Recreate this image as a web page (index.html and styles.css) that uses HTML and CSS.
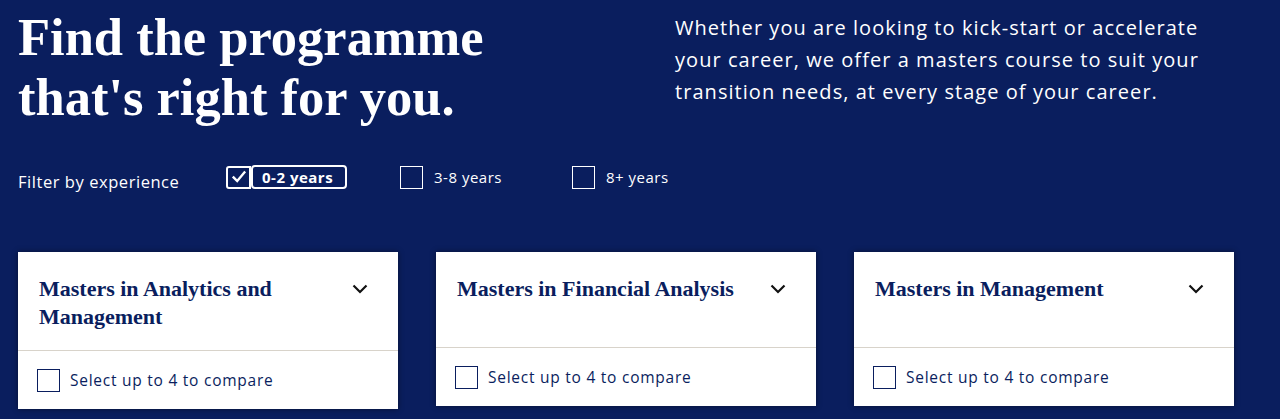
FILE: index.html
```html
<!DOCTYPE html>
<html lang="en">
<head>
<meta charset="utf-8">
<title>Find the programme</title>
<link rel="stylesheet" href="styles.css">
</head>
<body>
<main class="page">
  <section class="intro">
    <h1 class="intro-title">Find the programme that's right for you.</h1>
    <p class="intro-text">Whether you are looking to kick-start or accelerate your career, we offer a masters course to suit your transition needs, at every stage of your career.</p>
  </section>

  <section class="filter">
    <span class="filter-label">Filter by experience</span>
    <label class="option option-checked">
      <span class="box box-checked">
        <svg viewBox="0 0 20 20" width="18" height="18"><path d="M4 10.5 L8 14.5 L16 5" fill="none" stroke="#fff" stroke-width="2.6" stroke-linecap="square"/></svg>
      </span>
      <span class="option-text">0-2 years</span>
    </label>
    <label class="option">
      <span class="box"></span>
      <span class="option-text">3-8 years</span>
    </label>
    <label class="option">
      <span class="box"></span>
      <span class="option-text">8+ years</span>
    </label>
  </section>

  <section class="cards">
    <article class="card">
      <div class="card-head">
        <h2 class="card-title">Masters in Analytics and Management</h2>
        <svg class="chev" viewBox="0 0 16 10" width="16" height="10"><path d="M1.5 1.5 L8 8 L14.5 1.5" fill="none" stroke="#111" stroke-width="2.2"/></svg>
      </div>
      <div class="card-foot">
        <span class="cbox"></span>
        <span class="compare">Select up to 4 to compare</span>
      </div>
    </article>
    <article class="card">
      <div class="card-head">
        <h2 class="card-title">Masters in Financial Analysis</h2>
        <svg class="chev" viewBox="0 0 16 10" width="16" height="10"><path d="M1.5 1.5 L8 8 L14.5 1.5" fill="none" stroke="#111" stroke-width="2.2"/></svg>
      </div>
      <div class="card-foot">
        <span class="cbox"></span>
        <span class="compare">Select up to 4 to compare</span>
      </div>
    </article>
    <article class="card">
      <div class="card-head">
        <h2 class="card-title">Masters in Management</h2>
        <svg class="chev" viewBox="0 0 16 10" width="16" height="10"><path d="M1.5 1.5 L8 8 L14.5 1.5" fill="none" stroke="#111" stroke-width="2.2"/></svg>
      </div>
      <div class="card-foot">
        <span class="cbox"></span>
        <span class="compare">Select up to 4 to compare</span>
      </div>
    </article>
  </section>
</main>
</body>
</html>
```

FILE: styles.css
```css
* { box-sizing: border-box; }
html, body { margin: 0; padding: 0; }
body {
  background: #0a1e5e;
  color: #fff;
  font-family: "Open Sans", "Liberation Sans", sans-serif;
  height: 419px;
  overflow: hidden;
}
.page { padding: 0 18px; }

.intro {
  display: flex;
  align-items: flex-start;
}
.intro-title {
  margin: 7px 0 0 0;
  width: 500px;
  flex: none;
  font-family: "Liberation Serif", "Times New Roman", serif;
  font-weight: 700;
  font-size: 52.5px;
  line-height: 60px;
}
.intro-text {
  margin: 12px 0 0 157px;
  width: 560px;
  font-size: 20px;
  line-height: 32px;
  letter-spacing: 1.05px;
  font-weight: 400;
}

.filter {
  display: flex;
  align-items: center;
  margin-top: 37px;
  height: 26px;
}
.filter-label {
  font-size: 16.5px;
  letter-spacing: 0.55px;
  width: 208px;
  padding-top: 8px;
}
.option {
  display: flex;
  align-items: center;
  font-size: 15px;
  letter-spacing: 0.5px;
  width: 172px;
}
.option .box {
  width: 23px;
  height: 23px;
  border: 1.5px solid #fff;
  display: inline-flex;
  align-items: center;
  justify-content: center;
}
.option-text { margin-left: 11px; }
.option-checked { width: 174px; }
.option-checked .box {
  width: 25px;
  height: 23px;
  border: 2px solid #fff;
  border-radius: 3px 0 0 3px;
}
.option-checked .option-text {
  margin-left: 0;
  font-weight: 700;
  padding: 0 12px 0 9px;
  height: 24px;
  line-height: 20px;
  border: 2px solid #fff;
  border-radius: 4px;
}

.cards {
  display: flex;
  gap: 38px;
  margin-top: 62px;
  align-items: flex-start;
}
.card {
  width: 380px;
  background: #fff;
  color: #0a1e5e;
  box-shadow: 0 0 6px rgba(0, 0, 0, 0.45);
}
.card-head {
  display: flex;
  justify-content: space-between;
  align-items: flex-start;
  min-height: 96px;
  padding: 23px 30px 19px 21px;
  border-bottom: 1.5px solid #d8d3ca;
}
.card-title {
  margin: 0;
  font-family: "Liberation Serif", "Times New Roman", serif;
  font-weight: 700;
  font-size: 22px;
  line-height: 28px;
  max-width: 292px;
}
.chev { margin-top: 9px; flex: none; }
.card-foot {
  display: flex;
  align-items: center;
  height: 58px;
  padding-left: 19px;
}
.cbox {
  width: 23px;
  height: 23px;
  border: 1.5px solid #0a1e5e;
}
.compare {
  margin-left: 10px;
  font-size: 15.5px;
  letter-spacing: 0.75px;
}
```
